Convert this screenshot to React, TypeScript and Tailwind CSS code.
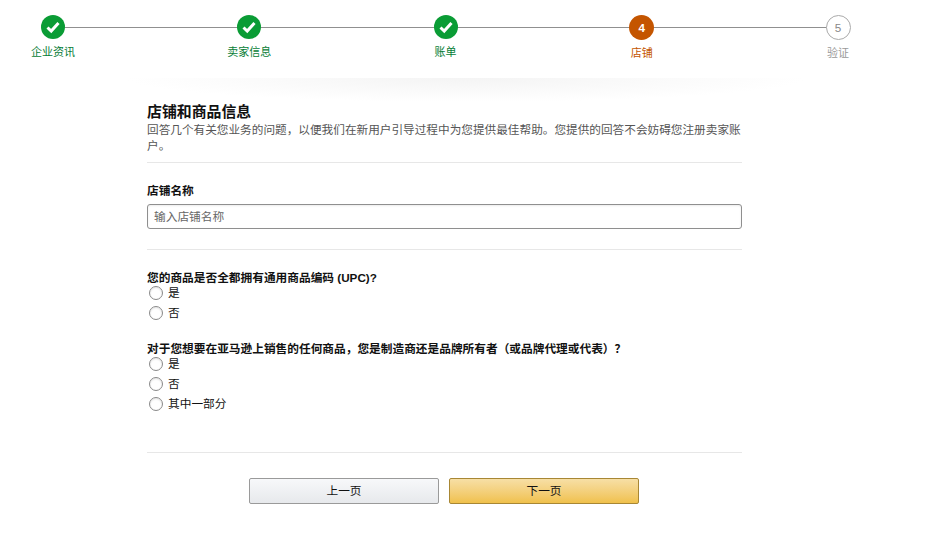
const steps = [
  { label: '企业资讯', state: 'done' },
  { label: '卖家信息', state: 'done' },
  { label: '账单', state: 'done' },
  { label: '店铺', state: 'current', num: 4 },
  { label: '验证', state: 'todo', num: 5 },
]

function Step({ label, state, num }: { label: string; state: string; num?: number }) {
  return (
    <div className="flex w-[88px] flex-col items-center">
      {state === 'done' && (
        <div className="flex h-[24px] w-[24px] items-center justify-center rounded-full bg-[#0a9c35]">
          <svg width="16" height="14" viewBox="0 0 16 14" fill="none">
            <path d="M2.5 7.5 L6.2 11 L13.5 3" stroke="white" strokeWidth="3" />
          </svg>
        </div>
      )}
      {state === 'current' && (
        <div className="flex h-[25px] w-[25px] items-center justify-center rounded-full bg-[#c45500] text-[11.7px] font-bold text-white">
          {num}
        </div>
      )}
      {state === 'todo' && (
        <div className="flex h-[25px] w-[25px] items-center justify-center rounded-full border border-[#aaaaaa] bg-white text-[11.7px] text-[#888888]">
          {num}
        </div>
      )}
      <span
        className={`mt-[5px] text-[11px] leading-[16px] ${
          state === 'done' ? 'text-[#067d36]' : state === 'current' ? 'text-[#c45500]' : 'text-[#999999]'
        }`}
      >
        {label}
      </span>
    </div>
  )
}

function Radio({ name, label }: { name: string; label: string }) {
  return (
    <label className="flex h-[20px] items-center text-[11.7px] text-[#111111]">
      <input
        type="radio"
        name={name}
        className="ml-[2px] mr-[5px] h-[14px] w-[14px] appearance-none rounded-full border border-[#8a8a8a] bg-white shadow-[inset_0_1px_2px_rgba(0,0,0,0.12)]"
      />
      {label}
    </label>
  )
}

export default function App() {
  return (
    <div className="min-h-[539px] bg-white font-['Liberation_Sans','Noto_Sans_CJK_SC',sans-serif]">
      {/* stepper */}
      <div className="relative flex justify-between pl-[9px] pr-[49px] pt-[15px]">
        <div className="absolute left-[53px] top-[27px] h-px w-[785px] bg-[#909090]" />
        {steps.map((s) => (
          <div key={s.label} className="relative">
            <Step {...s} />
          </div>
        ))}
      </div>

      {/* soft shadow under the stepper */}
      <div className="mx-auto mt-[17px] h-[24px] w-[680px] bg-[radial-gradient(ellipse_50%_100%_at_50%_0%,#f4f4f4,#ffffff)]" />

      <div className="ml-[147px] w-[595px]">
        <h1 className="mt-px text-[14.9px] font-bold leading-[18px] text-[#111111]">店铺和商品信息</h1>
        <p className="mt-[1px] text-[11.65px] leading-[16px] text-[#555555]">
          回答几个有关您业务的问题，以便我们在新用户引导过程中为您提供最佳帮助。您提供的回答不会妨碍您注册卖家账户。
        </p>
        <div className="mt-[8px] h-px bg-[#e7e7e7]" />

        <div className="mt-[20px] text-[11.7px] font-bold leading-[16px] text-[#111111]">店铺名称</div>
        <input
          placeholder="输入店铺名称"
          className="mt-[5px] h-[25px] w-full rounded-[3px] border border-[#8f8f8f] px-[6px] text-[11.7px] shadow-[inset_0_1px_2px_rgba(0,0,0,0.08)] outline-none placeholder:text-[#666666]"
        />
        <div className="mt-[20px] h-px bg-[#e7e7e7]" />

        <div className="mt-[22px] text-[11.7px] font-bold leading-[11px] text-[#111111]">
          您的商品是否全都拥有通用商品编码 (UPC)?
        </div>
        <Radio name="upc" label="是" />
        <Radio name="upc" label="否" />

        <div className="mt-[20px] text-[11.7px] font-bold leading-[11px] text-[#111111]">
          对于您想要在亚马逊上销售的任何商品，您是制造商还是品牌所有者（或品牌代理或代表）？
        </div>
        <Radio name="brand" label="是" />
        <Radio name="brand" label="否" />
        <Radio name="brand" label="其中一部分" />

        <div className="mt-[38px] h-px bg-[#e7e7e7]" />

        <div className="mt-[25px] flex justify-center gap-[10px] pr-px">
          <button
            type="button"
            className="h-[26px] w-[190px] rounded-[2px] border border-[#9a9a9a] bg-gradient-to-b from-[#f7f8fa] to-[#e7e9ec] text-[11.7px] text-[#111111]"
          >
            上一页
          </button>
          <button
            type="button"
            className="h-[26px] w-[190px] rounded-[2px] border border-[#a88734] bg-gradient-to-b from-[#f7dfa5] to-[#f0c14b] text-[11.7px] text-[#111111]"
          >
            下一页
          </button>
        </div>
      </div>
    </div>
  )
}
